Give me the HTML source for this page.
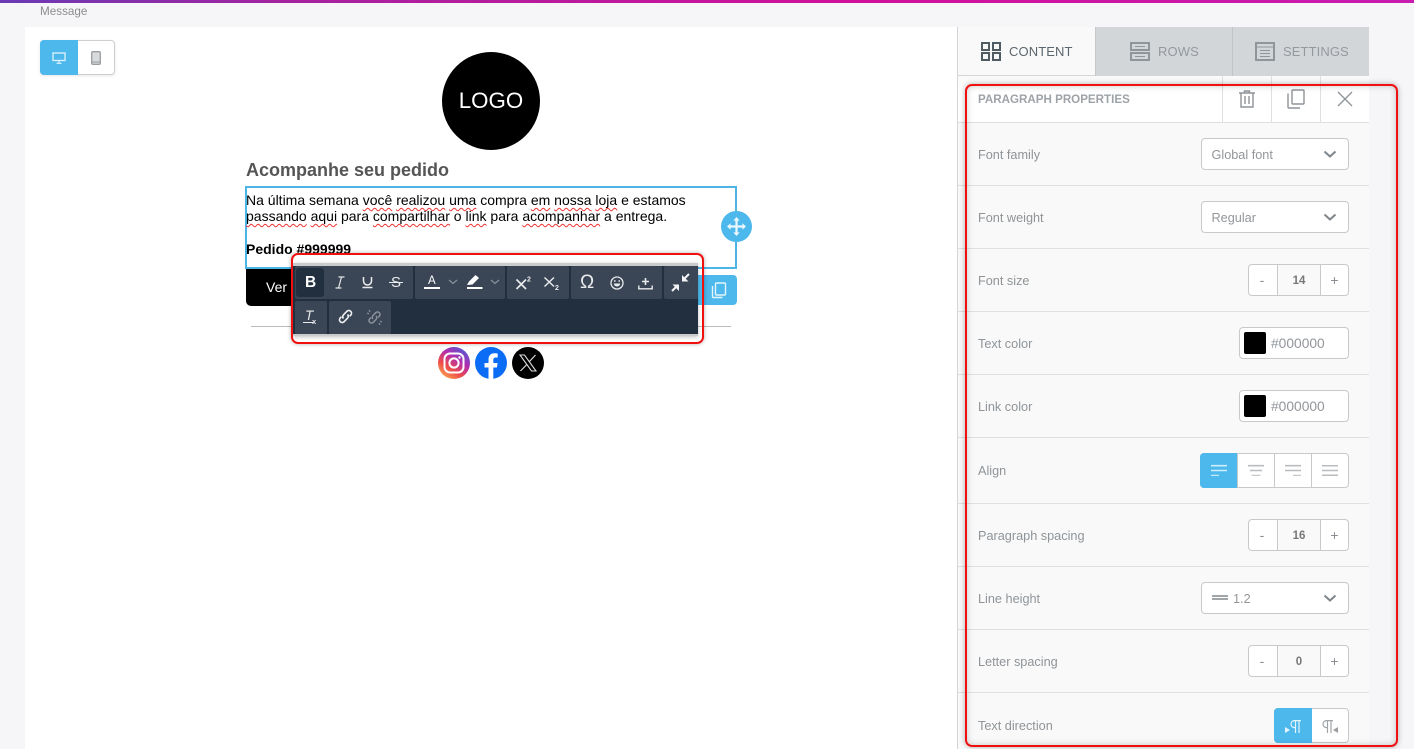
<!DOCTYPE html>
<html lang="pt"><head><meta charset="utf-8"><title>Message</title>
<style>
*{box-sizing:border-box}
html,body{margin:0;padding:0}
body{width:1414px;height:749px;overflow:hidden;position:relative;background:#f6f6f9;font-family:"Liberation Sans",sans-serif}
.a{position:absolute}
svg{position:absolute;overflow:visible}
.lbl{position:absolute;left:978px;font-size:12.7px;color:#8f9498;line-height:16px;white-space:nowrap}
.div{position:absolute;left:958px;width:411px;height:1px;background:#dfe0e1}
.box{position:absolute;background:#fff;border:1px solid #c8c9ca;border-radius:4px}
.sel{left:1201px;width:148px;height:32px;font-size:12.7px;color:#92969a;line-height:32px;padding-left:9.5px}
.step{position:absolute;left:1248px;width:101px;height:32px;background:#fff;border:1px solid #c8c9ca;border-radius:4px}
.step i{position:absolute;top:0;height:30px;font-style:normal;text-align:center;line-height:31px;font-size:14px;color:#8a8e92}
.step .m{left:0;width:26px}
.step .v{left:28px;width:44px;background:#f9f9f9;border-left:1px solid #c8c9ca;border-right:1px solid #c8c9ca;font-weight:bold;font-size:11.5px;color:#777;line-height:32px}
.step .p{left:72px;width:27px}
.col{left:1239px;width:110px;height:32px;font-size:13.8px;color:#92969a;line-height:31px;padding-left:31px}
.col b{position:absolute;left:4px;top:4px;width:22px;height:22px;background:#000;border-radius:2px}
.grp{position:absolute;background:#3a4655;height:33px;border-radius:2px}
.tx{position:absolute;font-size:14px;line-height:16px;color:#000;white-space:nowrap;text-decoration:none}
.sp{text-decoration:underline wavy #f03030;text-decoration-thickness:1.2px;text-underline-offset:2px;text-decoration-skip-ink:none}
.tab{position:absolute;top:27px;height:48px;font-size:13px;line-height:49px;letter-spacing:.1px}
</style></head><body>

<div class="a" style="left:0;top:0;width:1414px;height:3px;background:linear-gradient(90deg,#6a3ab5 0%,#a523a0 20%,#d0109a 60%,#c81bb0 100%)"></div>
<div class="a" style="left:40px;top:5px;font-size:11.7px;line-height:14px;color:#8d8d90">Message</div>

<div class="a" style="left:25px;top:27px;width:932px;height:722px;background:#fff"></div>

<!-- device switch -->
<div class="a" style="left:40px;top:40px;width:75px;height:35px;background:#fff;border:1px solid #cfcfcf;border-radius:4px;box-shadow:0 1px 3px rgba(0,0,0,.1)"></div>
<div class="a" style="left:40px;top:40px;width:38px;height:35px;background:#4cb8ec;border-radius:4px 0 0 4px"></div>
<svg style="left:52px;top:52px" width="14" height="12" viewBox="0 0 14 12"><rect x="1" y="1" width="12" height="7.5" fill="none" stroke="#dff3fc" stroke-width="1.3"/><path d="M7 9v2M4.5 11.3h5" stroke="#dff3fc" stroke-width="1.2"/></svg>
<svg style="left:91px;top:51px" width="10" height="14" viewBox="0 0 10 14"><rect x=".7" y=".7" width="8.600" height="12.600" rx="1" fill="#d8dadb" stroke="#9a9ea2" stroke-width="1.300"/><path d="M1 11h8" stroke="#9a9ea2"/></svg>

<!-- logo -->
<div class="a" style="left:442px;top:52px;width:98px;height:98px;border-radius:50%;background:#000;color:#fff;text-align:center;line-height:98px;font-size:22.300px">LOGO</div>

<div class="a" style="left:246px;top:160px;font-size:18px;line-height:20px;font-weight:bold;color:#555;white-space:nowrap">Acompanhe seu pedido</div>

<!-- text block -->
<div class="a" style="left:245px;top:186px;width:492px;height:83px;border:2px solid #4cb5e6"></div>
<div class="tx" style="left:246px;top:192px">Na última semana <span class="sp">você</span> <span class="sp">realizou</span> <span class="sp">uma</span> compra <span class="sp">em</span> <span class="sp">nossa</span> <span class="sp">loja</span> e estamos</div>
<div class="tx" style="left:246px;top:208px"><span class="sp">passando</span> <span class="sp">aqui</span> para <span class="sp">compartilhar</span> o <span class="sp">link</span> para <span class="sp">acompanhar</span> a entrega.</div>
<div class="tx" style="left:246px;top:241px;font-weight:bold">Pedido #999999</div>

<!-- move handle -->
<div class="a" style="left:721px;top:211px;width:31px;height:31px;border-radius:50%;background:#4cb8ec"></div>
<svg style="left:726px;top:216px" width="21" height="21" viewBox="0 0 21 21"><path d="M10.500 1l3.200 3.600h-2.100v4.800h4.800V7.300L20 10.500l-3.600 3.200v-2.100h-4.800v4.800h2.100L10.500 20l-3.200-3.600h2.100v-4.800H4.600v2.100L1 10.500l3.600-3.200v2.100h4.800V4.600H7.300z" fill="#eaf7fd"/></svg>

<!-- button -->
<div class="a" style="left:246px;top:269px;width:60px;height:37px;background:#000;border-radius:0 0 0 5px;color:#fff;font-size:14px;line-height:37px;padding-left:20px">Ver</div>

<!-- copy btn -->
<div class="a" style="left:697px;top:275px;width:40px;height:30px;background:#4cb8ec;border-radius:0 4px 4px 0"></div>
<svg style="left:711px;top:282px" width="16" height="17" viewBox="0 0 16 17"><rect x="4.500" y="1" width="10" height="12" rx="1" fill="none" stroke="#e4f5fd" stroke-width="1.400"/><path d="M1.500 4v10.500a1 1 0 0 0 1 1h9" fill="none" stroke="#e4f5fd" stroke-width="1.400"/></svg>

<div class="a" style="left:251px;top:326px;width:480px;height:1px;background:#bbb"></div>

<!-- toolbar -->
<div class="a" style="left:293px;top:263px;width:405px;height:73px;background:#222f3e;border-top:3px solid #c9cbcd;border-bottom:2px solid #c9cbcd;box-shadow:0 1px 4px rgba(0,0,0,.25)"></div>
<div class="grp" style="left:295px;top:266px;width:118px"></div>
<div class="a" style="left:296px;top:268px;width:28px;height:29px;background:#222f3e;border-radius:3px"></div>
<div class="grp" style="left:415px;top:266px;width:90px"></div>
<div class="grp" style="left:507px;top:266px;width:62px"></div>
<div class="grp" style="left:571px;top:266px;width:91px"></div>
<div class="grp" style="left:664px;top:266px;width:34px"></div>
<div class="grp" style="left:295px;top:301px;width:32px"></div>
<div class="grp" style="left:329px;top:301px;width:62px"></div>

<div class="a" style="left:305px;top:274px;color:#fff;font:bold 15.500px/18px 'Liberation Sans',sans-serif">B</div>
<svg style="left:335px;top:276px" width="10" height="13" viewBox="0 0 10 13"><path d="M3.500 1H9.500M.5 12H6.500M6.500 1L3.500 12" fill="none" stroke="#e4e6e8" stroke-width="1.200"/></svg>
<svg style="left:361px;top:276px" width="13" height="13" viewBox="0 0 13 13"><path d="M2.500 1v4a4 4 0 0 0 8 0V1" fill="none" stroke="#e8eaec" stroke-width="1.500"/><path d="M1.500 11.500h10" stroke="#e8eaec" stroke-width="1.500"/></svg>
<div class="a" style="left:391px;top:274px;color:#e8eaec;font:15px/18px 'Liberation Sans',sans-serif">S</div>
<div class="a" style="left:389px;top:282px;width:14px;height:1.400px;background:#e8eaec"></div>

<div class="a" style="left:428px;top:275px;color:#fff;font:11.500px/13px 'Liberation Sans',sans-serif">A</div>
<div class="a" style="left:424px;top:287px;width:16px;height:2px;background:#fff"></div>
<svg style="left:448px;top:279px" width="10" height="6" viewBox="0 0 10 6"><path d="M1 1l4 3.500L9 1" fill="none" stroke="#8a929b" stroke-width="1.200"/></svg>
<svg style="left:467px;top:275px" width="16" height="14" viewBox="0 0 16 14"><path d="M0 10l2-3.500L8.500 0 12 3l-6.500 6.500z" fill="#fff"/><rect y="12" width="15.500" height="2" fill="#fff"/></svg>
<svg style="left:490px;top:279px" width="10" height="6" viewBox="0 0 10 6"><path d="M1 1l4 3.500L9 1" fill="none" stroke="#8a929b" stroke-width="1.200"/></svg>

<svg style="left:516px;top:276px" width="16" height="14" viewBox="0 0 16 14"><path d="M.5 3.500l9.500 9.500M10 3.500L.5 13" stroke="#e8eaec" stroke-width="1.700"/><text x="11" y="5.500" font-size="7" font-weight="bold" fill="#e8eaec" font-family="Liberation Sans">2</text></svg>
<svg style="left:544px;top:277px" width="17" height="14" viewBox="0 0 17 14"><path d="M.5 .5l9.500 9M10 .5L.5 9.500" stroke="#e8eaec" stroke-width="1.500"/><text x="11" y="13" font-size="7" font-weight="bold" fill="#e8eaec" font-family="Liberation Sans">2</text></svg>

<div class="a" style="left:580px;top:273px;color:#e8eaec;font:19px/20px 'Liberation Sans',sans-serif">Ω</div>
<svg style="left:610px;top:276px" width="14" height="14" viewBox="0 0 14 14"><circle cx="7" cy="7" r="6" fill="none" stroke="#e8eaec" stroke-width="1.300"/><path d="M3.800 7.500h6.400a3.200 3 0 0 1-6.400 0z" fill="#e8eaec"/><circle cx="4.800" cy="5" r=".9" fill="#e8eaec"/><circle cx="9.200" cy="5" r=".9" fill="#e8eaec"/></svg>
<svg style="left:638px;top:277px" width="15" height="13" viewBox="0 0 15 13"><path d="M7.500 1v7M4 4.500h7" stroke="#e8eaec" stroke-width="1.600"/><path d="M.8 8.500v3.300h13.400V8.500" fill="none" stroke="#e8eaec" stroke-width="1.400"/></svg>
<svg style="left:671px;top:273px" width="19" height="19" viewBox="0 0 19 19"><path d="M18 1l-6 6" stroke="#f2f3f4" stroke-width="2"/><path d="M11 2v6.500h6.500z" fill="#f2f3f4"/><path d="M1 18l6-6" stroke="#f2f3f4" stroke-width="2"/><path d="M1.500 11.500H8V18z" fill="#f2f3f4"/></svg>

<div class="a" style="left:305px;top:309px;color:#e8eaec;font:italic 13.500px/13px 'Liberation Sans',sans-serif">T</div>
<div class="a" style="left:303px;top:322px;width:10px;height:1.400px;background:#e8eaec"></div>
<div class="a" style="left:312px;top:318px;color:#e8eaec;font:bold 7.500px/7px 'Liberation Sans',sans-serif">x</div>
<svg style="left:338px;top:309px" width="15" height="15" viewBox="0 0 15 15"><g fill="none" stroke="#f0f1f2" stroke-width="1.600"><path d="M5.500 9.500a2.600 2.600 0 0 1 0-3.700l3.600-3.700a2.700 2.700 0 0 1 3.800 3.800L11.500 7.300"/><path d="M9.500 5.500a2.600 2.600 0 0 1 0 3.700l-3.600 3.700a2.700 2.700 0 0 1-3.800-3.800L3.500 7.700"/></g></svg>
<svg style="left:366px;top:309px" width="17" height="17" viewBox="0 0 17 17"><g fill="none" stroke="#8a929b" stroke-width="1.500"><path d="M7 10a2.500 2.500 0 0 1 0-3.500l3-3a2.500 2.500 0 0 1 3.500 3.500l-1.500 1.500"/><path d="M10 7a2.500 2.500 0 0 1 0 3.500l-3 3A2.500 2.500 0 0 1 3.500 10L5 8.500"/><path d="M3 1l1 2M1 4l2 .800M14 16l-1-2M16 13l-2-.800" stroke-width="1.200"/></g></svg>

<!-- social -->
<svg style="left:438px;top:347px" width="32" height="32" viewBox="0 0 32 32"><defs><linearGradient id="ig" x1="0" y1="1" x2=".7" y2="0"><stop offset="0" stop-color="#fdc64f"/><stop offset=".4" stop-color="#ee4a4a"/><stop offset=".7" stop-color="#b02fb0"/><stop offset="1" stop-color="#5b55d0"/></linearGradient></defs><circle cx="16" cy="16" r="16" fill="url(#ig)"/><rect x="6.500" y="6.500" width="19" height="19" rx="5.500" fill="none" stroke="#fff" stroke-width="2"/><circle cx="16" cy="16" r="4.600" fill="none" stroke="#fff" stroke-width="2"/><circle cx="21.500" cy="10.500" r="1.200" fill="#fff"/></svg>
<svg style="left:475px;top:347px" width="32" height="32" viewBox="0 0 32 32"><circle cx="16" cy="16" r="16" fill="#0b6cf5"/><path d="M13.500 32V20.500H9.500V16h4v-3.500c0-4 2.400-6.200 6-6.200 1.700 0 3.200.3 3.200.3v3.900h-1.900c-1.900 0-2.500 1.200-2.500 2.400V16h4.300l-.7 4.500h-3.600V32z" fill="#fff"/></svg>
<svg style="left:512px;top:347px" width="32" height="32" viewBox="0 0 32 32"><circle cx="16" cy="16" r="16" fill="#000"/><path d="M8 8h4.500l11.500 16h-4.500z" fill="none" stroke="#ddd" stroke-width="1.100"/><path d="M23.500 8l-6.500 7M14.800 17.500L8.500 24" stroke="#ddd" stroke-width="1.200"/></svg>

<!-- red box toolbar -->
<div class="a" style="left:291px;top:253px;width:413px;height:91px;border:2px solid #f01010;border-radius:7px;box-shadow:0 0 4px rgba(0,0,0,.3)"></div>

<!-- SIDEBAR -->
<div class="a" style="left:957px;top:27px;width:1px;height:722px;background:#d5d5d7"></div>
<div class="a" style="left:958px;top:27px;width:411px;height:722px;background:#f9f9f9"></div>
<div class="a" style="left:958px;top:75px;width:411px;height:1px;background:#d5d7d9"></div>
<div class="a" style="left:1095px;top:27px;width:274px;height:49px;background:#d3d6d9"></div>
<div class="a" style="left:1095px;top:27px;width:1px;height:49px;background:#c6c9cc"></div>
<div class="a" style="left:1232px;top:27px;width:1px;height:49px;background:#c2c5c8"></div>

<svg style="left:981px;top:42px" width="20" height="19" viewBox="0 0 20 19" fill="none" stroke="#4f5c63" stroke-width="2"><rect x="1" y="1" width="7" height="7"/><rect x="12" y="1" width="7" height="7"/><rect x="1" y="11" width="7" height="7"/><rect x="12" y="11" width="7" height="7"/></svg>
<div class="tab" style="left:1009px;color:#5c666d">CONTENT</div>
<svg style="left:1130px;top:42px" width="20" height="19" viewBox="0 0 20 19" fill="none" stroke="#8f9599" stroke-width="2"><rect x="1" y="1" width="18" height="7"/><rect x="1" y="11" width="18" height="7"/><path d="M5 4.500h10M5 14.500h10" stroke-width="1"/></svg>
<div class="tab" style="left:1158px;color:#94999d">ROWS</div>
<svg style="left:1255px;top:42px" width="20" height="19" viewBox="0 0 20 19" fill="none" stroke="#8f9599"><rect x="1" y="1" width="18" height="17" stroke-width="2"/><path d="M1 5h18M5 8.500h10M5 11.500h10M5 14.500h10" stroke-width="1"/></svg>
<div class="tab" style="left:1283px;color:#94999d">SETTINGS</div>

<!-- header -->
<div class="a" style="left:958px;top:76px;width:411px;height:46px;background:linear-gradient(#f9f9f9 0,#fff 35%,#fff 100%)"></div>
<div class="a" style="left:978px;top:92px;font-size:11.600px;line-height:16px;font-weight:bold;color:#9ea3a8;white-space:nowrap">PARAGRAPH PROPERTIES</div>
<div class="a" style="left:1222px;top:76px;width:1px;height:46px;background:#dfe0e1"></div>
<div class="a" style="left:1271px;top:76px;width:1px;height:46px;background:#dfe0e1"></div>
<div class="a" style="left:1320px;top:76px;width:1px;height:46px;background:#dfe0e1"></div>
<svg style="left:1239px;top:90px" width="16" height="18" viewBox="0 0 16 18" fill="none" stroke="#8e9398" stroke-width="1.400"><path d="M0 3h16M5.500 3V1h5v2M2 3v14h12V3M6 6v8M10 6v8"/></svg>
<svg style="left:1287px;top:89px" width="18" height="20" viewBox="0 0 18 20" fill="none" stroke="#8e9398" stroke-width="1.400"><rect x="5" y="1" width="12" height="14" rx="1"/><path d="M1 4.500V18a1 1 0 0 0 1 1h11"/></svg>
<svg style="left:1337px;top:91px" width="16" height="16" viewBox="0 0 16 16"><path d="M1 1l14 14M15 1L1 15" stroke="#8e9398" stroke-width="1.300"/></svg>

<div class="div" style="top:122px"></div><div class="div" style="top:185px"></div><div class="div" style="top:248px"></div><div class="div" style="top:311px"></div><div class="div" style="top:374px"></div><div class="div" style="top:437px"></div><div class="div" style="top:503px"></div><div class="div" style="top:566px"></div><div class="div" style="top:629px"></div><div class="div" style="top:692px"></div>

<div class="lbl" style="top:147px">Font family</div>
<div class="box sel" style="top:138px">Global font</div>
<svg style="left:1323px;top:150px" width="14" height="8" viewBox="0 0 14 8"><path d="M1.500 1.500L7 6.500l5.500-5" fill="none" stroke="#7f868b" stroke-width="2"/></svg>

<div class="lbl" style="top:210px">Font weight</div>
<div class="box sel" style="top:201px">Regular</div>
<svg style="left:1323px;top:213px" width="14" height="8" viewBox="0 0 14 8"><path d="M1.500 1.500L7 6.500l5.500-5" fill="none" stroke="#7f868b" stroke-width="2"/></svg>

<div class="lbl" style="top:273px">Font size</div>
<div class="step" style="top:264px"><i class="m">-</i><i class="v">14</i><i class="p">+</i></div>

<div class="lbl" style="top:336px">Text color</div>
<div class="box col" style="top:327px"><b></b>#000000</div>

<div class="lbl" style="top:399px">Link color</div>
<div class="box col" style="top:390px"><b></b>#000000</div>

<div class="lbl" style="top:463px">Align</div>
<div class="a" style="left:1200px;top:453px;width:149px;height:35px;background:#fff;border:1px solid #c8c9ca;border-radius:4px"></div>
<div class="a" style="left:1200px;top:453px;width:38px;height:35px;background:#4cb8ec;border-radius:4px 0 0 4px"></div>
<div class="a" style="left:1274px;top:453px;width:1px;height:35px;background:#c8c9ca"></div>
<div class="a" style="left:1237px;top:453px;width:1px;height:35px;background:#c8c9ca"></div>
<div class="a" style="left:1311px;top:453px;width:1px;height:35px;background:#c8c9ca"></div>
<svg style="left:1211px;top:465px" width="16" height="11" viewBox="0 0 16 11"><path d="M0 .7h16M0 5.500h16" stroke="#cfeefb" stroke-width="1.600"/><path d="M0 10.300h8" stroke="#e4f5fd" stroke-width="1"/></svg>
<svg style="left:1248px;top:465px" width="16" height="11" viewBox="0 0 16 11" stroke="#b9bcbf"><path d="M0 .7h16M2 5.500h12" stroke-width="1.600"/><path d="M3.500 10.300h9"/></svg>
<svg style="left:1285px;top:465px" width="16" height="11" viewBox="0 0 16 11" stroke="#b9bcbf"><path d="M0 .7h16M0 5.500h16" stroke-width="1.600"/><path d="M8 10.300h8"/></svg>
<svg style="left:1322px;top:465px" width="16" height="11" viewBox="0 0 16 11" stroke="#b9bcbf"><path d="M0 .7h16M0 5.500h16M0 10.300h16" stroke-width="1.500"/></svg>

<div class="lbl" style="top:528px">Paragraph spacing</div>
<div class="step" style="top:519px"><i class="m">-</i><i class="v">16</i><i class="p">+</i></div>

<div class="lbl" style="top:591px">Line height</div>
<div class="box sel" style="top:582px;padding-left:31px">1.2</div>
<div class="a" style="left:1212px;top:595px;width:16px;height:1.500px;background:#a2a5a8"></div>
<div class="a" style="left:1212px;top:598px;width:16px;height:1.500px;background:#a2a5a8"></div>
<svg style="left:1323px;top:594px" width="14" height="8" viewBox="0 0 14 8"><path d="M1.500 1.500L7 6.500l5.500-5" fill="none" stroke="#7f868b" stroke-width="2"/></svg>

<div class="lbl" style="top:654px">Letter spacing</div>
<div class="step" style="top:645px"><i class="m">-</i><i class="v">0</i><i class="p">+</i></div>

<div class="lbl" style="top:718px">Text direction</div>
<div class="a" style="left:1274px;top:708px;width:75px;height:35px;background:#fff;border:1px solid #c8c9ca;border-radius:4px"></div>
<div class="a" style="left:1274px;top:708px;width:38px;height:35px;background:#4cb8ec;border-radius:4px 0 0 4px"></div>
<svg style="left:1290px;top:720px" width="11" height="13" viewBox="0 0 11 13" fill="none" stroke="#e4f5fd" stroke-width="1.200"><path d="M11 .6H4.500a3.500 3.500 0 0 0 0 7H5.500M5.500 .6V13M9 .6V13"/></svg>
<svg style="left:1285px;top:727px" width="5" height="6" viewBox="0 0 5 6"><path d="M0 0l5 3-5 3z" fill="#e4f5fd"/></svg>
<svg style="left:1322px;top:720px" width="11" height="13" viewBox="0 0 11 13" fill="none" stroke="#a0a4a7" stroke-width="1.200"><path d="M11 .6H4.500a3.500 3.500 0 0 0 0 7H5.500M5.500 .6V13M9 .6V13"/></svg>
<svg style="left:1333px;top:727px" width="5" height="6" viewBox="0 0 5 6"><path d="M5 0L0 3l5 3z" fill="#9a9ea2"/></svg>

<!-- red box panel -->
<div class="a" style="left:965px;top:84px;width:433px;height:663px;border:2px solid #f01010;border-radius:7px;box-shadow:0 0 6px rgba(0,0,0,.3),inset 0 0 7px rgba(0,0,0,.2)"></div>

</body></html>
